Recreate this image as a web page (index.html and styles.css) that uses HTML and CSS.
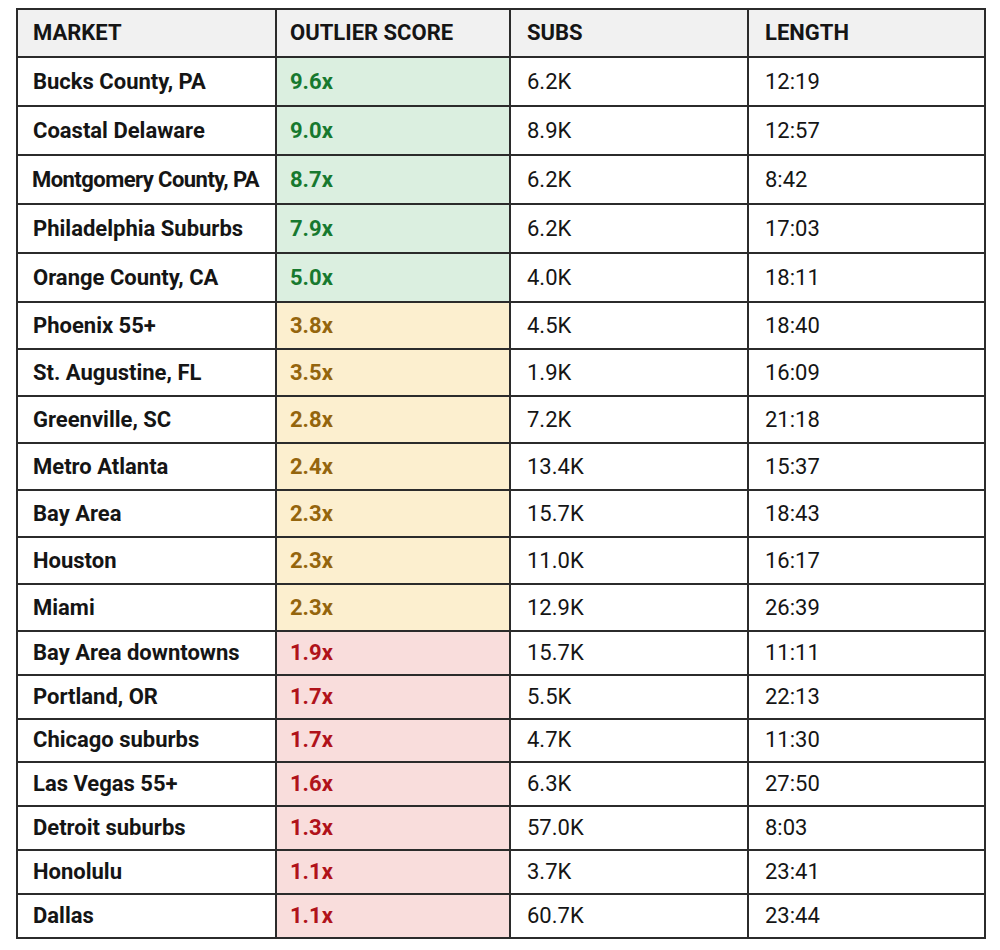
FILE: index.html
```html
<!DOCTYPE html>
<html lang="en">
<head>
<meta charset="utf-8">
<title>Market Outlier Scores</title>
<link rel="stylesheet" href="styles.css">
</head>
<body>
<div class="wrap">
<table class="markets">
  <colgroup>
    <col class="c-market"><col class="c-score"><col class="c-subs"><col class="c-len">
  </colgroup>
  <thead>
    <tr><th class="name">MARKET</th><th class="score">OUTLIER SCORE</th><th>SUBS</th><th>LENGTH</th></tr>
  </thead>
  <tbody>
    <tr class="hi"><td class="name">Bucks County, PA</td><td class="score">9.6x</td><td>6.2K</td><td>12:19</td></tr>
    <tr class="hi"><td class="name">Coastal Delaware</td><td class="score">9.0x</td><td>8.9K</td><td>12:57</td></tr>
    <tr class="hi"><td class="name long">Montgomery County, PA</td><td class="score">8.7x</td><td>6.2K</td><td>8:42</td></tr>
    <tr class="hi"><td class="name">Philadelphia Suburbs</td><td class="score">7.9x</td><td>6.2K</td><td>17:03</td></tr>
    <tr class="hi"><td class="name">Orange County, CA</td><td class="score">5.0x</td><td>4.0K</td><td>18:11</td></tr>
    <tr class="mid"><td class="name">Phoenix 55+</td><td class="score">3.8x</td><td>4.5K</td><td>18:40</td></tr>
    <tr class="mid"><td class="name">St. Augustine, FL</td><td class="score">3.5x</td><td>1.9K</td><td>16:09</td></tr>
    <tr class="mid"><td class="name">Greenville, SC</td><td class="score">2.8x</td><td>7.2K</td><td>21:18</td></tr>
    <tr class="mid"><td class="name">Metro Atlanta</td><td class="score">2.4x</td><td>13.4K</td><td>15:37</td></tr>
    <tr class="mid"><td class="name">Bay Area</td><td class="score">2.3x</td><td>15.7K</td><td>18:43</td></tr>
    <tr class="mid"><td class="name">Houston</td><td class="score">2.3x</td><td>11.0K</td><td>16:17</td></tr>
    <tr class="mid"><td class="name">Miami</td><td class="score">2.3x</td><td>12.9K</td><td>26:39</td></tr>
    <tr class="lo"><td class="name">Bay Area downtowns</td><td class="score">1.9x</td><td>15.7K</td><td>11:11</td></tr>
    <tr class="lo"><td class="name">Portland, OR</td><td class="score">1.7x</td><td>5.5K</td><td>22:13</td></tr>
    <tr class="lo"><td class="name">Chicago suburbs</td><td class="score">1.7x</td><td>4.7K</td><td>11:30</td></tr>
    <tr class="lo"><td class="name">Las Vegas 55+</td><td class="score">1.6x</td><td>6.3K</td><td>27:50</td></tr>
    <tr class="lo"><td class="name">Detroit suburbs</td><td class="score">1.3x</td><td>57.0K</td><td>8:03</td></tr>
    <tr class="lo"><td class="name">Honolulu</td><td class="score">1.1x</td><td>3.7K</td><td>23:41</td></tr>
    <tr class="lo"><td class="name">Dallas</td><td class="score">1.1x</td><td>60.7K</td><td>23:44</td></tr>
  </tbody>
</table>
</div>
</body>
</html>
```

FILE: styles.css
```css
html, body {
  margin: 0;
  padding: 0;
  background: #ffffff;
}

.wrap {
  padding: 8px 16px;
}

.markets {
  width: 968px;
  table-layout: fixed;
  border-collapse: collapse;
  font-family: Roboto, "Liberation Sans", Arial, sans-serif;
  font-size: 22px;
  color: #151515;
  border: 2px solid #2b2b2b;
}

.c-market { width: 259px; }
.c-score { width: 234px; }
.c-subs { width: 238px; }
.c-len { width: 237px; }

.markets th,
.markets td {
  border: 2px solid #2b2b2b;
  padding: 0 8px 0 16px;
  text-align: left;
  vertical-align: middle;
  line-height: 26px;
}

.markets th {
  height: 46px;
  background: #f1f1f1;
  font-weight: 700;
}

.markets td {
  font-weight: 400;
}

.markets .name {
  padding-left: 15px;
  padding-right: 2px;
  white-space: nowrap;
}

.markets td.name {
  font-weight: 700;
}

.markets .score {
  padding-left: 13px;
}

.markets td.score {
  font-weight: 700;
}

.markets td.long {
  padding-left: 14px;
  letter-spacing: -0.55px;
}

.hi td { height: 47px; }
.mid td { height: 45px; }
.lo td { height: 41.8px; }

.hi .score { background: #dbefe0; color: #17792f; }
.mid .score { background: #fcefcf; color: #94650d; }
.lo .score { background: #f9dddc; color: #b0121a; }
```
